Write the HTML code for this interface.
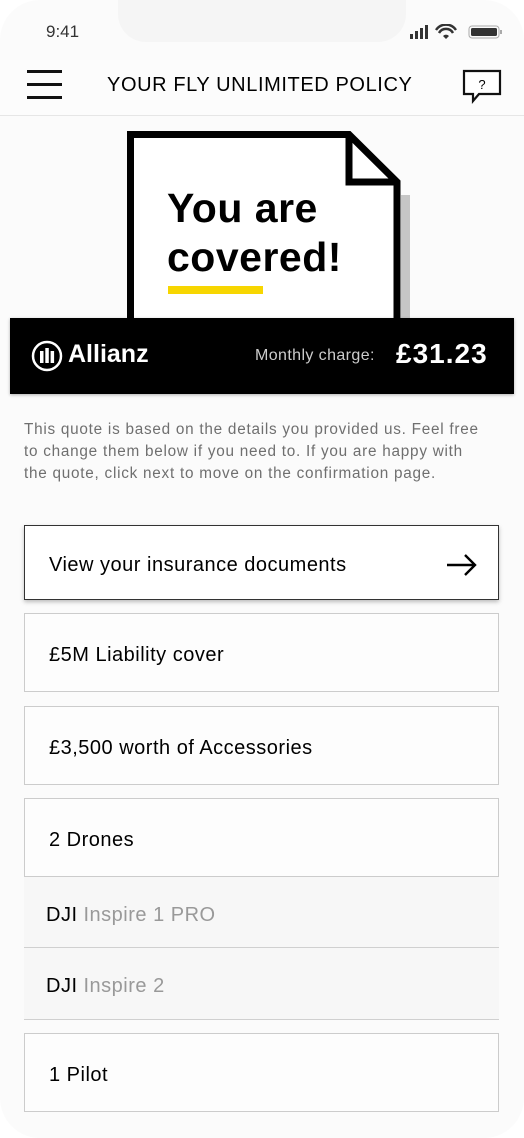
<!DOCTYPE html>
<html><head><meta charset="utf-8"><style>
*{margin:0;padding:0;box-sizing:border-box}
body{width:524px;height:1138px;background:#fff;font-family:"Liberation Sans",sans-serif;position:relative;overflow:hidden;color:#000}
.phone{position:absolute;left:0;top:0;width:524px;height:1138px;background:#fbfbfb;border-radius:40px}
.notch{position:absolute;left:118px;top:0;width:288px;height:42px;background:#f5f5f5;border-radius:0 0 28px 28px}
.time{position:absolute;left:46px;top:22px;font-size:17px;color:#333}
.nav{position:absolute;left:0;top:60px;width:524px;height:56px;border-bottom:1px solid #e6e6e6;background:#fcfcfc}
.title{position:absolute;left:107px;top:74px;font-size:20px;letter-spacing:0.6px}
.burger span{position:absolute;left:27px;width:35px;height:3px;background:#111}
.box{position:absolute;left:24px;width:475px;border:1.5px solid #ccc;background:#fdfdfd;font-size:20px;letter-spacing:0.5px;padding-left:24px;padding-top:6px;display:flex;align-items:center}
.gray{position:absolute;left:24px;width:475px;background:#f7f7f7;border-bottom:1.5px solid #d0d0d0;font-size:20px;letter-spacing:0.5px;padding-left:22px;padding-top:6px;display:flex;align-items:center}
.gray i{font-style:normal;color:#999;margin-left:6px}
</style></head><body>
<div class="phone"></div>
<div class="notch"></div>
<div class="time">9:41</div>
<svg style="position:absolute;left:409px;top:24px" width="95" height="16">
<rect x="1" y="10" width="3" height="5" fill="#333"/><rect x="6" y="7" width="3" height="8" fill="#333"/><rect x="11" y="4" width="3" height="11" fill="#333"/><rect x="16" y="1" width="3" height="14" fill="#333"/>
<path d="M27 6 A12 12 0 0 1 47 6 M30 9 A8 8 0 0 1 44 9" stroke="#333" stroke-width="2.4" fill="none"/><path d="M34 12 L37 15 L40 12 A4 4 0 0 0 34 12Z" fill="#333"/>
<rect x="60" y="2" width="30" height="12" rx="3" fill="none" stroke="#aaa" stroke-width="1"/><rect x="62" y="4" width="26" height="8" rx="1.5" fill="#333"/><rect x="91" y="6" width="2" height="4" fill="#aaa"/>
</svg>
<div class="nav"></div>
<div class="burger"><span style="top:70px"></span><span style="top:83px"></span><span style="top:96px"></span></div>
<div class="title">YOUR FLY UNLIMITED POLICY</div>
<svg style="position:absolute;left:462px;top:69px" width="40" height="35"><path d="M2 2 H38 V25 H17 L11 32 V25 H2 Z" fill="#fff" stroke="#111" stroke-width="2.2"/><text x="20" y="20" font-size="13" text-anchor="middle" font-family="Liberation Sans">?</text></svg>

<svg style="position:absolute;left:125px;top:129px" width="290" height="195">
<rect x="276" y="66" width="9" height="129" fill="#c6c6c6"/>
<path d="M5.5 5.5 H224 L272 53 V195 H5.5Z" fill="#fff" stroke="#000" stroke-width="7"/>
<path d="M224 5 V53 H272" fill="none" stroke="#000" stroke-width="7"/>
<text x="42" y="93" font-size="41" font-weight="bold" font-family="Liberation Sans" letter-spacing="0.5">You are</text>
<text x="42" y="142" font-size="41" font-weight="bold" font-family="Liberation Sans" letter-spacing="0.5">covered!</text>
<rect x="43" y="157" width="95" height="8" fill="#f7d600"/>
</svg>
<div style="position:absolute;left:10px;top:318px;width:504px;height:76px;background:#000;box-shadow:0 1px 3px rgba(0,0,0,.3)"></div>
<svg style="position:absolute;left:31px;top:340px" width="32" height="32"><circle cx="16" cy="16" r="14" fill="none" stroke="#fff" stroke-width="2.5"/><rect x="9" y="11" width="3.5" height="12" fill="#fff"/><rect x="14.3" y="8" width="3.5" height="15" fill="#fff"/><rect x="19.6" y="11" width="3.5" height="12" fill="#fff"/></svg>
<div style="position:absolute;left:68px;top:340px;color:#fff;font-size:25px;font-weight:bold">Allianz</div>
<div style="position:absolute;left:255px;top:347px;color:#ccc;font-size:16px;letter-spacing:0.4px">Monthly charge:</div>
<div style="position:absolute;left:396px;top:338px;color:#fff;font-size:28px;font-weight:bold;letter-spacing:1px">£31.23</div>

<div style="position:absolute;left:24px;top:419px;width:462px;font-size:15.3px;line-height:22px;color:#6f6f6f;letter-spacing:0.75px">This quote is based on the details you provided us. Feel free to change them below if you need to. If you are happy with the quote, click next to move on the confirmation page.</div>

<div class="box" style="top:525px;height:75px;border:1.5px solid #333;box-shadow:0 2px 4px rgba(0,0,0,.25);background:#fff">View your insurance documents
<svg style="position:absolute;right:20px;top:28px" width="32" height="22"><path d="M1 11 H29 M19 1 L29 11 L19 21" stroke="#000" stroke-width="2.4" fill="none"/></svg></div>
<div class="box" style="top:613px;height:79px">£5M Liability cover</div>
<div class="box" style="top:706px;height:79px">£3,500 worth of Accessories</div>
<div class="box" style="top:798px;height:79px">2 Drones</div>
<div class="gray" style="top:877px;height:71px">DJI<i>Inspire 1 PRO</i></div>
<div class="gray" style="top:948px;height:72px">DJI<i>Inspire 2</i></div>
<div class="box" style="top:1033px;height:79px">1 Pilot</div>
</body></html>
